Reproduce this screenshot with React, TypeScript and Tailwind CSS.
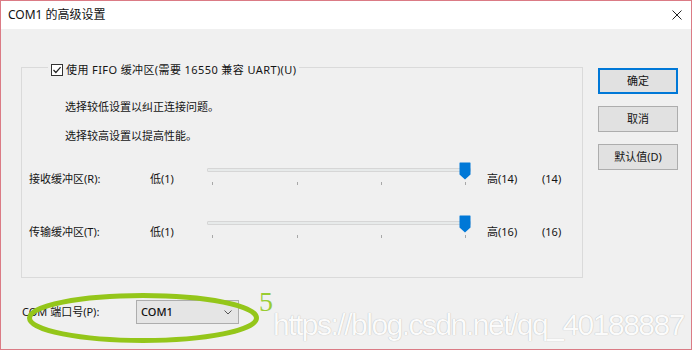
import React from "react";

const uiFont = { fontFamily: '"Noto Sans", "Noto Sans CJK SC", sans-serif' };

function Slider() {
  const ticks = [5, 90, 174, 258];
  return (
    <div className="relative h-full w-[264px]">
      <div className="absolute left-0 top-[1px] h-[4px] w-[264px] rounded-[1px] border border-[#d6d6d6] bg-[#e7eaea]" />
      {ticks.map((x) => (
        <div key={x} className="absolute top-[15px] h-[3px] w-px bg-[#a8a8a8]" style={{ left: x }} />
      ))}
      <svg className="absolute left-[252px] top-[-5px]" width="12" height="18" viewBox="0 0 12 18">
        <path d="M1 0.5h10a0.5 0.5 0 0 1 .5.5v11.5L6 17.5 0.5 12.5V1a0.5 0.5 0 0 1 .5-.5z" fill="#0078d7" />
      </svg>
    </div>
  );
}

function BufferRow({ label, high, value }: { label: string; high: string; value: string }) {
  return (
    <div className="flex h-[24px] items-center pl-[7px]">
      <span className="w-[121px]">{label}</span>
      <span className="w-[57px]">低(1)</span>
      <Slider />
      <span className="ml-[16px] w-[55px]">{high}</span>
      <span>{value}</span>
    </div>
  );
}

export default function App() {
  return (
    <div
      className="relative flex h-[350px] w-[692px] flex-col overflow-hidden border border-[#db7b85] bg-[#f0f0f0] text-[11px] text-[#141414]"
      style={uiFont}
    >
      {/* title bar */}
      <div className="flex h-[28px] shrink-0 items-center justify-between bg-white pl-[7px] pr-[9px]">
        <span className="text-[12px] text-[#111]">COM1 的高级设置</span>
        <svg width="10" height="10" viewBox="0 0 10 10">
          <path d="M0.5 0.5l9 9M9.5 0.5l-9 9" stroke="#222" strokeWidth="1" />
        </svg>
      </div>

      <div className="flex">
        <div className="flex flex-col pl-[20px] pt-[38px]">
          {/* group box */}
          <div className="relative h-[211px] w-[562px] border border-[#dadada]">
            <div className="absolute left-[26px] top-[-6px] flex h-[16px] items-center gap-[3px] bg-[#f0f0f0] px-[3px]">
              <svg width="12" height="12" viewBox="0 0 12 12">
                <rect x="0.5" y="0.5" width="11" height="11" fill="#fff" stroke="#333" />
                <path d="M2.5 6l2.4 2.5L9.6 3.2" fill="none" stroke="#222" strokeWidth="1.2" />
              </svg>
              <span className="tracking-[0.4px]">使用 FIFO 缓冲区(需要 16550 兼容 UART)(U)</span>
            </div>
            <div className="ml-[43px] mt-[31px] h-[16px] leading-[16px]">选择较低设置以纠正连接问题。</div>
            <div className="ml-[43px] mt-[13px] h-[16px] leading-[16px]">选择较高设置以提高性能。</div>
            <div className="mt-[23px]">
              <BufferRow label="接收缓冲区(R):" high="高(14)" value="(14)" />
            </div>
            <div className="mt-[29px]">
              <BufferRow label="传输缓冲区(T):" high="高(16)" value="(16)" />
            </div>
          </div>

          {/* COM port */}
          <div className="ml-[1px] mt-[22px] flex items-center">
            <span className="w-[114px]">COM 端口号(P):</span>
            <div className="flex h-[24px] w-[103px] items-center justify-between border border-[#adadad] bg-[#e5e5e5] pl-[4px] pr-[6px]">
              <span className="font-medium text-[#111]">COM1</span>
              <svg width="8" height="5" viewBox="0 0 8 5">
                <path d="M0.5 0.5L4 4 7.5 0.5" fill="none" stroke="#555" strokeWidth="1" />
              </svg>
            </div>
          </div>
        </div>

        {/* buttons */}
        <div className="ml-[15px] flex flex-col gap-[12px] pt-[39px]">
          <button className="h-[26px] w-[80px] border-2 border-[#0078d7] bg-[#e1e1e1]">确定</button>
          <button className="h-[26px] w-[80px] border border-[#adadad] bg-[#e1e1e1]">取消</button>
          <button className="h-[26px] w-[80px] border border-[#adadad] bg-[#e1e1e1]">默认值(D)</button>
        </div>
      </div>

      {/* green annotation ellipse */}
      <svg className="pointer-events-none absolute left-0 top-0" width="692" height="350">
        <ellipse cx="142" cy="317" rx="113.5" ry="22.5" fill="none" stroke="#94c61a" strokeWidth="5" />
      </svg>
      <span
        className="absolute left-[258px] top-[287px] text-[28px] leading-none text-[#99cc33]"
        style={{ fontFamily: '"Liberation Serif", serif' }}
      >
        5
      </span>

      {/* watermark */}
      <span
        className="pointer-events-none absolute left-[272px] top-[309px] text-[30px] leading-none tracking-[-1.5px] text-[#fbfbfb] [text-shadow:0_0_1px_rgba(0,0,0,0.3)]"
        style={{ fontFamily: '"Liberation Sans", sans-serif' }}
      >
        https://blog.csdn.net/qq_40188887
      </span>
    </div>
  );
}
